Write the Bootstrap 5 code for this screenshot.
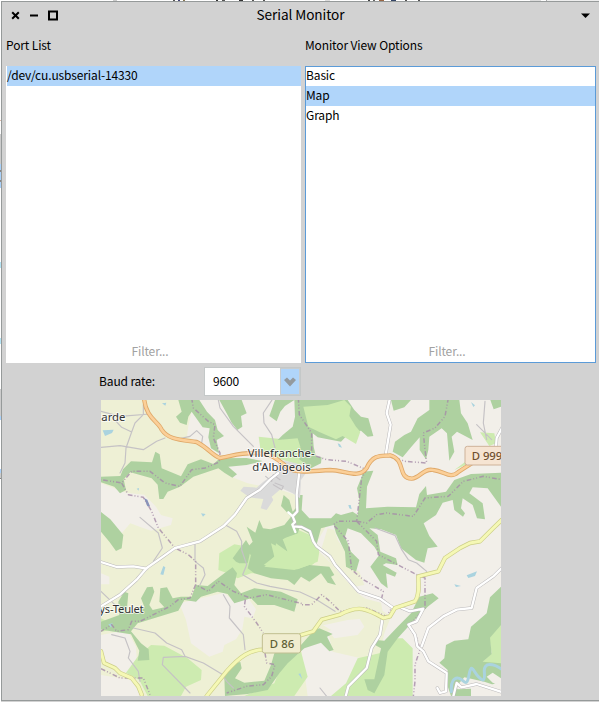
<!DOCTYPE html>
<html lang="en">
<head>
<meta charset="utf-8">
<meta name="viewport" content="width=device-width, initial-scale=1">
<title>Serial Monitor</title>
<link href="https://cdn.jsdelivr.net/npm/bootstrap@5.3.0/dist/css/bootstrap.min.css" rel="stylesheet">
<style>
body{width:599px;height:702px;overflow:hidden;background:#fff;color:#000;font:12px/20px "Noto Sans CJK SC",sans-serif;letter-spacing:-.13px}
.desk{height:702px;padding:1px 0 1px 1px;background:
linear-gradient(90deg,#fff 113px,#ccc 113px 117px,#fff 117px 173px,#555 173px 175px,#fff 175px 178px,#447 178px 180px,#fff 180px 183px,#875 183px 185px,#fff 185px 216px,#333 216px 218px,#fff 218px 222px,#555 222px 225px,#fff 225px 239px,#333 239px 243px,#fff 243px 252px,#555 252px 254px,#fff 254px 263px,#555 263px 265px,#fff 265px 325px,#ddd 325px 330px,#fff 330px 368px,#444 368px 370px,#fff 370px 373px,#666 373px 375px,#fff 375px 379px,#964 379px 384px,#fff 384px 391px,#346 391px 396px,#fff 396px 405px,#555 405px 407px,#fff 407px 418px,#555 418px 420px,#fff 420px 530px,#ddd 530px 541px,#fff 541px 546px,#aaa 546px 547px,#eee 547px) 0 0/100% 1px no-repeat,
linear-gradient(#fff 120px,#dba 120px 121px,#fff 121px 134px,#ccc 134px 164px,#a9d1fa 164px 170px,#888 170px 172px,#a9d1fa 172px 180px,#888 180px 182px,#a9d1fa 182px 188px,#fff 188px 262px,#b5e5f5 262px 268px,#fff 268px 338px,#b5e5f5 338px 344px,#fff 344px 389px,#ccc 389px 416px,#a9d1fa 416px 420px,#fff 420px 469px,#a9d1fa 469px 473px,#ccc 473px 478px,#888 478px 479px,#fff 479px) 0 0/1px 100% no-repeat,#d2d2d2}
.monitor{height:700px;background:#d2d2d2;border:1px solid #969a9a;border-right:0;padding:0 3px 0 4px}
.titlebar{height:33px;margin:0 -3px 0 -4px;padding:0 9px;font-size:13.6px;line-height:25px;letter-spacing:-.08px}
.titlebar svg{display:block;margin-top:7px}
.caption{height:31px}
.port-col{width:295px}
.view-col{width:291px}
.pane{height:297px;background:#fff}
.pane.focused{border:1px solid #5b9bd8}
.pane .entry{height:20px;line-height:17px}
.focused .entry:first-child{height:19px;line-height:15px}
.pane .entry.chosen{background:#b0d5fa}
.port-col .entry{margin-left:1px}
.filter{color:#a2a2a2;height:22px;line-height:22px;padding-right:7px}
.port-col .filter{line-height:20px}
.baud{height:37px;padding:4px 0 0 93px}
.baud-label{width:105px;padding-top:4px}
.combo{width:97px;height:29px;border:1px solid #c4c8c8;background:#fff}
.combo .value{padding:0 0 2px 8px}
.combo .pick{width:20px;background:#b0d5fa;border:1px solid #c8ccce}
.map{display:block;width:400px;height:296px;margin-left:95px;letter-spacing:0}
.map text{font-family:"Noto Sans",sans-serif;font-size:34px;fill:#333;paint-order:stroke;stroke:#ffffffb0;stroke-width:6px;stroke-linejoin:round}
.map text.shield{stroke:none;font-weight:500}
.g{fill:#aed1a0}.l{fill:#cdebb0}.p{fill:#f2efe9}.c{fill:#eef0d5}.u{fill:#dadada}.w{fill:#aad3df}
.b,.t,.rc,.rw,.oc,.of,.yc,.yf{fill:none;stroke-linejoin:round;stroke-linecap:round}
.b{stroke:#a58ba7;stroke-width:4.5;stroke-dasharray:14 6 3 6 3 7;opacity:.8;stroke-linecap:butt}
.t{stroke:#c5c2c5;stroke-width:3.5}
.rc{stroke:#bcbabb;stroke-width:10}.rw{stroke:#fff;stroke-width:7}
.oc{stroke:#dfa868;stroke-width:13}.of{stroke:#fbcf98;stroke-width:8}
.yc{stroke:#ccce88;stroke-width:13}.yf{stroke:#f5f8b5;stroke-width:9}
</style>
</head>
<body>
<main class="desk">
<section class="monitor">
<header class="titlebar d-flex justify-content-between">
<svg width="48" height="12" viewBox="0 0 48 12" fill="none" stroke="#000"><path d="M1.2 3.2L7.8 9.8M7.8 3.2L1.2 9.8" stroke-width="2"/><path d="M19 6.5H27" stroke-width="2"/><path d="M38 2.5H46V10.5H38Z" stroke-width="2"/></svg>
<span>Serial Monitor</span>
<svg width="48" height="12" viewBox="0 0 48 12"><path d="M39 4.5H48L43.5 9Z"/></svg>
</header>
<div class="d-flex justify-content-between">
<div class="port-col"><div class="caption">Port List</div>
<div class="pane d-flex flex-column"><div class="entry chosen">/dev/cu.usbserial-14330</div><div class="filter mt-auto text-center">Filter...</div></div></div>
<div class="view-col"><div class="caption">Monitor View Options</div>
<div class="pane focused d-flex flex-column"><div class="entry">Basic</div><div class="entry chosen">Map</div><div class="entry">Graph</div><div class="filter mt-auto text-center">Filter...</div></div></div>
</div>
<div class="baud d-flex"><span class="baud-label">Baud rate:</span>
<div class="combo d-flex justify-content-between align-items-center"><span class="value">9600</span><span class="pick align-self-stretch d-flex align-items-center justify-content-center"><svg width="12" height="10" viewBox="0 0 12 10"><path d="M0 3L3 0.5L6 3.5L9 0.5L12 3L6 9.5Z" fill="#949a9e"/></svg></span></div></div>
<svg class="map" viewBox="3 6 1200 888" preserveAspectRatio="none">
<g transform="translate(3 6)">
<rect width="1200" height="888" class="c"/>
<!-- open land -->
<path class="p" d="M280 0H1200V888H620L600 740L690 690L640 660L700 620L760 630L790 680L770 705L700 715L680 690L695 755L780 775L830 790L850 700L870 650L770 580L690 490L640 440L680 370L600 350L600 290L540 270L440 250L390 230L375 200L470 185L400 172L355 165L295 130L258 108L262 78ZM0 250L75 278L130 284L165 320L180 345L215 355L210 375L150 392L120 382L88 370L62 400L0 335ZM0 520L25 530L25 553L0 553ZM0 705L50 695L85 703L105 740L108 790L75 818L30 805L0 785ZM235 610L370 578L400 605L440 592L465 628L455 655L430 650L424 688L405 718L370 735L365 755L325 770L270 730L255 660ZM0 825L90 840L122 888H0Z"/>
<path class="c" d="M680 385L700 390L710 420L735 455L740 500L775 515L790 555L760 560L690 490L660 450ZM600 560L690 545L720 570L770 590L840 608L848 650L740 660L600 690Z"/>
<!-- meadows -->
<path class="l" d="M473 110L545 118L600 95L635 130L632 185L595 195L530 175L480 160ZM355 460L400 433L425 437L430 455L500 410L580 385L640 410L655 450L640 490L600 520H450L410 535L380 520L352 510ZM75 818L110 770L150 735L190 737L260 775L302 810L300 840L255 860L240 888H140L115 840ZM430 888L520 850L540 800L600 755L620 830L580 888ZM690 888L735 850L770 775L835 760L870 715L905 715L935 745L935 888ZM0 655L30 670V690L0 695ZM1200 660L1165 715L1172 760L1140 790L1200 795ZM1137 97L1180 100L1185 130L1165 138ZM1060 210L1100 180L1105 190Z"/>
<!-- woods -->
<path class="g" d="M232 0H295L318 35L342 60L350 90L369 108L347 120L354 160L330 145L322 112L326 85L305 82L272 35L262 50L257 75L237 68L225 50L242 35ZM355 0H422L437 40L420 48L424 80L409 90L392 68L377 40ZM522 0H580L552 18L538 35L527 64L505 48L515 20ZM580 0H740L760 30L780 50L802 55L817 108L800 110L780 92L745 98L730 115L720 125L650 112L635 100L638 140L645 170L662 172L660 190L630 205L595 178L598 140L590 115L530 120L545 105L575 80L582 50ZM870 0H930L910 22L878 32ZM985 0H1075L1080 40L1100 70L1115 120L1068 95L1052 110L1060 155L1045 182L1038 100L1022 85L985 110L982 150L975 178L956 150V112L930 142L905 172L875 155L882 125L910 105L930 95L950 55L985 30ZM1168 0H1200V20L1178 28ZM0 230L58 228L66 208L90 184L153 187L163 155L176 163L182 205L240 229L260 193L300 178L337 192L357 175L437 174L485 183L437 195L382 200L408 223L394 233L370 218L352 205L277 230L237 260L200 275L187 297L175 297L170 254L152 235L88 217L68 238L75 270L57 280L40 260L0 247ZM0 336L28 358L67 405L62 445L45 453L25 425L0 395ZM437 380L463 398L475 360L486 385L508 388L550 375L570 350L540 318L548 285L565 300L575 335L588 320L590 285L605 285L602 330L625 355L690 355L705 340L720 345L755 335L770 345L775 300L768 265L782 230L785 215L817 212L798 260L795 325L860 320L945 322L955 282L975 258L978 285L1035 275L1060 240L1110 222L1200 218V320L1160 265L1115 262L1105 280L1145 310L1152 358L1128 355L1115 315L1085 295L1080 325L1092 340L1086 350L1060 330L1055 300L1025 308L1005 345L968 370L985 408L1010 440L980 445L970 488L945 480L900 445L885 405L840 388L805 385L830 405L838 455L885 475L890 495L855 490L845 495L887 518L882 530L855 520L860 565L840 550L808 500L835 465L820 440L780 400L740 385L732 410L750 455L775 480L765 515L735 500L732 455L705 400L698 375L660 385L645 440L622 400L595 385L590 402L545 418L560 455L525 430L520 470L490 500L580 510L625 495L685 500L700 525L690 530L705 555L680 548L660 520L625 545L600 530L580 555L560 540L510 535L460 520L440 505L450 465L432 450L455 425Z"/>
<path class="g" d="M370 520L395 502L408 520L400 555L420 580L460 565L540 575L590 598L580 635L520 615L470 615L450 595L400 610L380 582L350 575L300 590L285 605L250 600L232 632L110 670L90 694L120 730L143 748L145 780L110 782L115 752L90 703L30 694L0 688V665L55 645L52 605L70 575L82 580L77 635L110 635L130 620L120 595L138 562L155 560L160 575L145 615L155 630L190 622L175 605L178 565L198 562L215 595L240 590L272 590L285 555L320 558ZM395 475L435 420L450 445L440 490H415L405 485ZM372 888L370 830L400 790L418 786L422 805L402 835L430 848L490 842L510 795L520 760L600 735L640 690L655 685L695 702L678 710L698 750L685 754L660 728L610 745L560 790L535 820L500 870L440 882ZM825 720L850 722L890 680L930 640L955 590L995 580L1013 595L980 620L935 665L890 715L860 755L850 825L820 880L800 870L790 838L820 838L840 745L822 735ZM1200 560L1167 592L1157 640L1110 680L1102 718L1060 722L1035 735L1030 775L1015 788L1040 810L1037 850L1050 888H1110L1200 840V790L1145 785L1172 762L1167 713L1200 675Z"/>
<!-- clearings -->
<path class="l" d="M607 20L680 15L730 0L750 20L745 48L765 80L778 95L765 132L725 108L705 118L655 96L622 80ZM488 495L520 470L510 430L560 455L550 415L595 398L630 425L655 455L650 485L590 508Z"/>
<path class="p" d="M1157 830L1175 818L1200 835V855L1175 848ZM1065 860L1090 832L1150 845L1200 862V888H1110V866L1070 868Z"/>
<path class="u" d="M428 260L467 263L487 245L522 220L535 180L585 190L625 205L600 240L597 295L575 280L542 265L512 290L517 300L497 330L479 325L487 297L445 292L418 272Z"/>
<!-- water -->
<path class="w" d="M5 91L38 89L33 99L12 108ZM183 10L196 8L193 17ZM300 340L314 342L306 350ZM107 266L114 264L113 272ZM178 523L187 498L193 502L187 525ZM22 673L35 670L30 683ZM710 130L717 133L723 143L714 140ZM742 315L749 315L752 328L745 325ZM1110 6L1122 16L1117 21ZM1097 526L1128 514L1122 528L1102 534ZM1060 553L1080 558L1065 561ZM592 822L598 820L604 838Z"/>
<path d="M129 294L139 299L147 319L139 319Z" fill="#8593bb"/>
<path d="M1052 879C1047 845 1060 830 1075 835S1097 865 1104 825S1117 815 1132 830S1152 845 1150 815S1177 790 1203 808" fill="none" stroke="#aad3df" stroke-width="9"/>
</g>
<!-- tracks -->
<path class="t" d="M3 40L60 55L150 48M30 50L65 88L95 102L105 75L130 50V20M95 102L78 150L75 195L60 225M3 148L60 143L130 155L170 130L195 120M240 122L270 115L290 98L308 115L305 135M355 6L360 30L400 85L460 145M520 0L490 45L492 75L515 110L525 150M120 358L175 405L187 450L160 490M375 380L410 400L425 430V456L440 500L428 530L470 555L510 565L600 582L650 605L705 640M285 440V490L310 510L315 530L300 560M497 235L515 250L520 230L540 245M520 260L545 275L550 265L525 255M3 580L50 625M100 690L165 705L200 735L245 755L255 775L310 795L365 828L380 850L400 870M255 775L190 778L187 800L270 885M370 590L390 625L388 660L430 710L435 755M35 710L75 720L90 760L85 780L115 820L120 850M825 390L885 412L905 455L925 485L950 495L980 520M660 870L680 895M1155 10L1150 75L1160 125M1130 80L1175 125"/>
<!-- parish boundaries -->
<path class="b" d="M275 0L280 30L325 70L345 80L340 120L360 165L358 192L315 210L275 215L240 265L195 255L150 220L95 220L65 255L3 245M65 255L85 290L130 298L155 340L175 390L225 450L265 470L287 490V560L325 580L355 550L400 580L450 600L500 590L606 617M287 560L270 600L235 605L210 625L120 670L95 670L85 695L50 700L35 680L3 700M436 605L433 625L470 675L490 705M495 765L500 795L525 800L515 835L490 860L440 865L380 885M3 812L60 840L130 840L150 890M595 0L598 50L635 105L635 170L680 185L740 190L800 215L785 240L770 370M1045 0L1035 55L1005 90L970 105L975 155L980 195L915 190L860 170M770 370L800 375L830 350L860 345L940 355L975 300L1045 295L1090 250L1150 235L1206 245M770 370H715L700 380L745 430L755 515L790 545L850 580L845 600L875 630L860 655L800 630L720 640L690 610L665 590L635 620L600 620M770 370L830 430L835 470L950 530L975 540V630L925 685L950 720L960 755L945 800V850L940 895"/>
<!-- minor roads -->
<path class="rc" d="M225 450L300 430L370 385L405 350L440 300L480 275L510 245L535 225M225 450L190 475L140 510L110 545L60 590L3 625M3 492L50 507L100 505L140 512M870 0L860 45L872 80L858 165M1206 90L1190 120L1188 145M580 385L605 387L630 400L640 430L650 445L690 475L705 500L745 545L775 580L840 602L880 630M847 665L840 710L815 750L800 810L775 835L745 865L737 895M905 630L930 640L970 632L950 670L925 680L945 710L952 745L970 760L985 790L1040 825L1038 880L1020 885L1012 870M965 745L985 690L1030 655L1070 635L1115 630L1130 570L1180 535L1206 510M1060 895L1070 855L1085 868L1130 858L1206 882M598 222L590 290L592 340L578 355L585 380"/>
<path class="rw" d="M225 450L300 430L370 385L405 350L440 300L480 275L510 245L535 225M225 450L190 475L140 510L110 545L60 590L3 625M3 492L50 507L100 505L140 512M870 0L860 45L872 80L858 165M1206 90L1190 120L1188 145M580 385L605 387L630 400L640 430L650 445L690 475L705 500L745 545L775 580L840 602L880 630M847 665L840 710L815 750L800 810L775 835L745 865L737 895M905 630L930 640L970 632L950 670L925 680L945 710L952 745L970 760L985 790L1040 825L1038 880L1020 885L1012 870M965 745L985 690L1030 655L1070 635L1115 630L1130 570L1180 535L1206 510M1060 895L1070 855L1085 868L1130 858L1206 882M598 222L590 290L592 340L578 355L565 343M578 355L585 372L577 380L586 402"/>
<!-- main roads -->
<path class="yc" d="M3 760L12 795L45 810L60 825L95 840L115 865L125 890M320 894L380 820C420 775 450 755 490 755M600 712L640 700L665 665L720 650C775 620 800 632 850 660L870 655L885 630L945 610C960 590 955 560 955 535L1015 520L1035 480L1080 450L1110 435L1140 430L1180 390L1206 365"/>
<path class="yf" d="M3 760L12 795L45 810L60 825L95 840L115 865L125 890M320 894L380 820C420 775 450 755 490 755M600 712L640 700L665 665L720 650C775 620 800 632 850 660L870 655L885 630L945 610C960 590 955 560 955 535L1015 520L1035 480L1080 450L1110 435L1140 430L1180 390L1206 365"/>
<path class="oc" d="M132 0C137 60 175 70 185 95C205 125 240 125 290 132C325 150 340 175 360 180C400 175 400 165 470 165C515 170 520 175 550 198C580 230 620 220 690 216C735 216 775 245 800 210C820 165 850 175 870 172C920 185 890 240 935 242C960 240 970 210 1000 216C1035 220 1050 245 1075 222C1100 205 1110 200 1140 180"/>
<path class="of" d="M132 0C137 60 175 70 185 95C205 125 240 125 290 132C325 150 340 175 360 180C400 175 400 165 470 165C515 170 520 175 550 198C580 230 620 220 690 216C735 216 775 245 800 210C820 165 850 175 870 172C920 185 890 240 935 242C960 240 970 210 1000 216C1035 220 1050 245 1075 222C1100 205 1110 200 1140 180"/>
<text x="4" y="70" textLength="72">arde</text><text x="443" y="177" textLength="201">Villefranche-</text><text x="457" y="219" textLength="175">d'Albigeois</text><text x="-2" y="644" textLength="133">ys-Teulet</text>
<rect x="1095" y="145" width="130" height="56" rx="7" fill="#f6e4d2" stroke="#ceb299" stroke-width="3"/><text class="shield" x="1115" y="186" style="fill:#705030" textLength="92">D 999</text>
<rect x="487" y="707" width="115" height="58" rx="7" fill="#f0edcf" stroke="#c1bf91" stroke-width="3"/><text class="shield" x="509" y="750" style="fill:#5e6035" textLength="74">D 86</text>
</svg>
</section>
</main>
<script src="https://cdn.jsdelivr.net/npm/bootstrap@5.3.0/dist/js/bootstrap.bundle.min.js"></script>
</body>
</html>
